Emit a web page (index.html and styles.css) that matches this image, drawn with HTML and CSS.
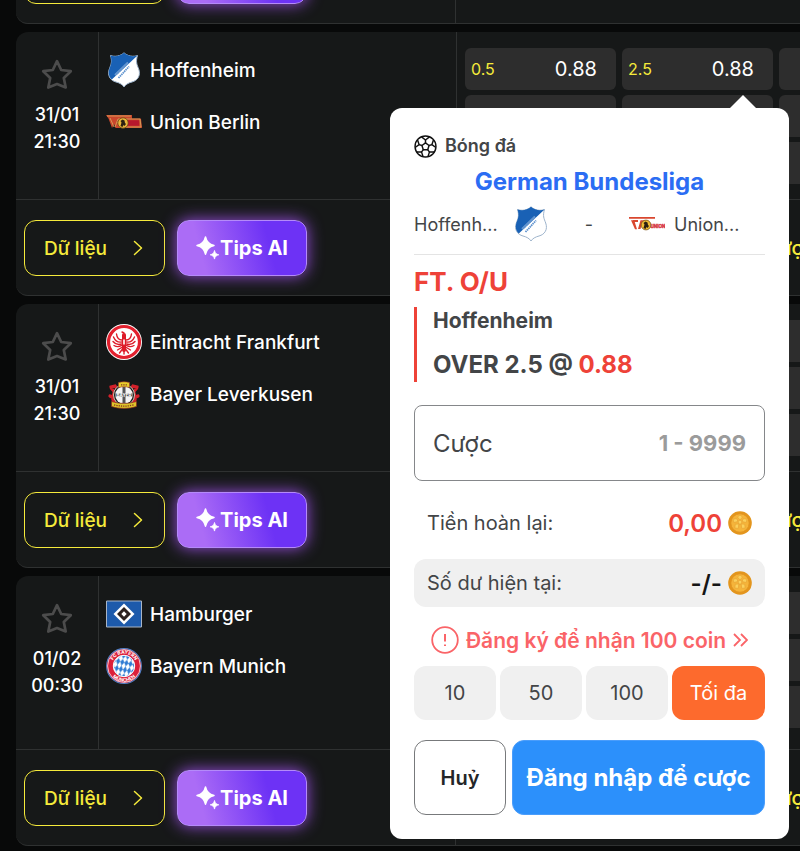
FILE: index.html
```html
<!DOCTYPE html>
<html lang="vi">

<head>
  <meta charset="UTF-8" />
  <meta name="viewport" content="width=device-width, initial-scale=1.0" />
  <title>German Bundesliga - Bóng đá</title>
  <link rel="stylesheet" href="styles.css">
</head>

<body>
  <!-- Icon và logo dùng chung -->
  <svg class="sprite" aria-hidden="true">
    <symbol id="star" viewBox="0 0 32 32">
      <path d="M16 2.200 20.200 11l9.600 1.200-7 6.700 1.900 9.600L16 25l-8.700 3.500 1.900-9.600-7-6.700L11.800 11z" fill="none" stroke="#4c4c4c" stroke-width="2.700" stroke-linejoin="round" />
    </symbol>
    <symbol id="chevron" viewBox="0 0 10 16">
      <path d="M1.500 1.500 8.500 8l-7 6.500" fill="none" stroke="currentColor" stroke-width="1.500" stroke-linecap="round" stroke-linejoin="round" />
    </symbol>
    <symbol id="sparkle" viewBox="0 0 24 24">
      <path d="M9.500 1c1 5 3.200 7.300 8.500 8.600-5.300 1.300-7.500 3.600-8.500 8.600C8.500 13.200 6.300 10.900 1 9.600 6.300 8.300 8.500 6 9.500 1z" fill="#fff" stroke="#fff" stroke-width="1.500" stroke-linejoin="round" />
      <path d="M18.500 14.500c.6 2.600 1.700 3.700 4.300 4.300-2.600.6-3.700 1.700-4.300 4.300-.6-2.600-1.700-3.700-4.300-4.300 2.600-.6 3.700-1.700 4.300-4.300z" fill="#fff" stroke="#fff" stroke-width=".8" stroke-linejoin="round" />
    </symbol>
    <symbol id="ball" viewBox="0 0 24 24">
      <g fill="none" stroke="#111" stroke-width="1.500" stroke-linejoin="round">
        <circle cx="12" cy="12" r="10.900" />
        <path d="m12 8.300 3.700 2.700-1.400 4.300H9.700L8.300 11z" />
        <path d="M12 8.300V5.200M15.700 11l3-1M14.300 15.300l1.900 2.600M9.700 15.300l-1.900 2.600M8.300 11l-3-1" />
        <path d="M7.800 2 12 5.200 16.200 2M20.300 5.200 18.700 10l4.100 3M21.200 17.700l-5-.1-1.700 5M9.500 22.600l-1.700-5-5 .1M1.200 13l4.100-3-1.600-4.800" />
      </g>
    </symbol>
    <symbol id="coin" viewBox="0 0 24 24">
      <circle cx="12" cy="12" r="11.800" fill="#e3951d" />
      <circle cx="12" cy="12" r="9.200" fill="#f5b43a" stroke="#e0921f" stroke-width=".8" />
      <g fill="#fbd05c" stroke="#e8a535" stroke-width=".7">
        <path d="m12 9 2 1.500-.8 2.500h-2.400L10 10.500z" />
        <path d="M12 9 9.500 6 12 4l2.500 2zM14 10.500l1.500-3 3.500.8-.8 3.200zM13.200 13l3.500.2.500 3.800-3.500.4zM10.800 13l-.5 4.400-3.500-.4.500-3.800zM10 10.500l-4.200 1L5 8.300l3.500-.8z" />
      </g>
    </symbol>
    <symbol id="hoffenheim" viewBox="0 0 36 36">
      <path d="M4.500 3.500c4 1.500 10 .8 13.500-2.700 3.500 3.500 9.500 4.200 13.500 2.700-2 6.500-.5 9 1.200 13.500 2.300 6.500-1 11.500-6.700 13-3.500.9-6.500 2.500-8 5-1.500-2.500-4.500-4.100-8-5-5.700-1.500-9-6.500-6.700-13C5 12.500 6.500 10 4.500 3.500z" fill="#fff" stroke="#9eb4cc" />
      <path d="M4.500 3.500c4 1.500 10 .8 13.500-2.700 3.500 3.500 9.500 4.200 13.500 2.700L5.800 27.500C3 25 2 21.500 3.300 17 5 12.500 6.500 10 4.500 3.500z" fill="#1961b5" />
      <path d="M9 23 22 10.500" stroke="#fff" stroke-width="2" opacity=".35" />
      <path d="m10 22.500 11.500-11M12.500 26 23 14.500" stroke="#5f93cf" stroke-width="1.800" stroke-dasharray="1.500 .6" />
    </symbol>
    <symbol id="union" viewBox="0 0 36 16">
      <path d="M0 1h26v3.500h9L36 14H9.500L8 10 6 14 2.500 4.500z" fill="#c9462c" />
      <path d="M1 2h24M4 4l4 9M12 5l-3 8M12 5h3M11 8.500h3M20 5h14l1 8H20" fill="none" stroke="#d8a05a" stroke-width=".9" />
      <path d="M22 9h11" stroke="#b8172c" stroke-width="5.500" />
      <circle cx="17" cy="9" r="5.200" fill="#e8b53c" stroke="#6b4a18" stroke-width=".8" />
      <path d="m14.500 12 1-3.500-1-1.500 2-1.500 2 1 .5 2.500 1 1-1.500 2-1-1-1 2z" fill="#2b2112" />
    </symbol>
    <symbol id="union-light" viewBox="0 0 36 16">
      <path d="M0 1h26v1.800H0zM2 4.200h3.200l2.800 9H6zM9 13l2.500-8.800H16v2h-2.800l-.5 2h2v1.800h-2.500l-.7 3zM4 4h5v2H4z" fill="#d9472f" />
      <text x="21.500" y="12" class="logo-text" font-size="4.500" fill="#d63340" stroke="#d63340" stroke-width=".4">UNION</text>
      <circle cx="17" cy="9" r="4.900" fill="#f0bd35" stroke="#7a551f" stroke-width=".8" />
      <path d="m14.500 12 1-3.500-1-1.500 2-1.500 2 1 .5 2.500 1 1-1.500 2-1-1-1 2z" fill="#2b2112" />
    </symbol>
    <symbol id="frankfurt" viewBox="0 0 36 36">
      <circle cx="18" cy="18" r="18" fill="#fff" />
      <circle cx="18" cy="18" r="15.500" fill="#fff" stroke="#e2202e" stroke-width="3.200" />
      <g fill="none" stroke="#dd1b29" stroke-linecap="round">
        <path d="M18 11v15" stroke-width="4" />
        <path d="M16 16c-3 0-5-2-5.500-6M15.500 18c-3 .5-6-.5-8-5M15.500 20c-3 1-6 .5-8.500-2.500M15.500 21.500c-2.500 1.500-5 1.500-7.500 0M20 16c3 0 5-2 5.500-6M20.500 18c3 .5 6-.5 8-5M20.500 20c3 1 6 .5 8.500-2.500M20.500 21.500c2.500 1.500 5 1.500 7.500 0M16.500 23l-5 3M19.500 23l5 3M16.500 25l-3 4M19.500 25l3 4M18 26v4M18 9l-2-1" stroke-width="1.400" />
      </g>
      <path d="M17.200 15.500h1.600v5h-1.600z" fill="#fff" />
    </symbol>
    <symbol id="leverkusen" viewBox="0 0 36 36">
      <g fill="none" stroke="#d3202a" stroke-width="3.200" stroke-linecap="round">
        <path d="M9 26c-4-2-2-6-1-9s-3-3-3-6l4-1 3 4M27 26c4-2 2-6 1-9s3-3 3-6l-4-1-3 4M4 20l4 2M32 20l-4 2" />
      </g>
      <circle cx="18" cy="19" r="10.500" fill="#1a1a1a" stroke="#c9c4b5" />
      <circle cx="18" cy="19" r="8.800" fill="#f4f4f4" />
      <path d="M16.500 11h3v16h-3zM9.500 17.500h17v3h-17z" fill="#555" />
      <text x="18" y="20.500" class="logo-text" font-size="4.500" fill="#fff" text-anchor="middle">BAYER</text>
      <path d="M12.500 6.500c4-1 7-1 11 0v5c-4-1-7-1-11 0z" fill="#e8cf2b" stroke="#a5322a" stroke-width=".6" />
      <path d="M5.500 25.500c8 2.500 17 2.500 25 0v5c-8 2.500-17 2.500-25 0z" fill="#dcc52a" stroke="#8a2a20" stroke-width=".7" />
      <path d="M8 28.800c7 1.800 13 1.800 20 0M15 8.800h6" fill="none" stroke="#8a3520" stroke-width="1.300" stroke-dasharray="1.300 1" />
    </symbol>
    <symbol id="hamburger" viewBox="0 0 36 36">
      <path d="M.5 5h35v26H.5z" fill="#1d5aab" stroke="#a9b5c6" />
      <path d="m18 7.500 10.500 10.500L18 28.500 7.500 18z" fill="#fff" />
      <path d="m18 11 7 7-7 7-7-7z" fill="#2b211f" />
      <path d="m18 15.300 2.700 2.700-2.700 2.700-2.700-2.700z" fill="#fff" />
    </symbol>
    <symbol id="bayern" viewBox="0 0 36 36">
      <defs>
        <pattern id="lozenge" width="4.200" height="7" patternUnits="userSpaceOnUse" patternTransform="rotate(12)">
          <path d="m2.100 0 2.100 3.500L2.100 7 0 3.500z" fill="#2f7bd3" />
        </pattern>
        <path id="bayern-top" d="M5.700 18a12.300 12.300 0 0 1 24.600 0" />
        <path id="bayern-bottom" d="M2.300 18a15.700 15.700 0 0 0 31.400 0" />
      </defs>
      <circle cx="18" cy="18" r="17.400" fill="#dc1f3a" stroke="#4f7fc4" stroke-width="1.100" />
      <circle cx="18" cy="18" r="16.400" fill="none" stroke="#fff" stroke-width=".7" />
      <circle cx="18" cy="18" r="10.700" fill="#fff" />
      <circle cx="18" cy="18" r="10.700" fill="url(#lozenge)" stroke="#fff" />
      <text class="logo-text" font-size="4.800" fill="#fff" text-anchor="middle"><textPath href="#bayern-top" startOffset="50%">FC BAYERN</textPath></text>
      <text class="logo-text" font-size="4.800" fill="#fff" text-anchor="middle"><textPath href="#bayern-bottom" startOffset="50%">MÜNCHEN</textPath></text>
    </symbol>
  </svg>

  <main class="match-list">
    <article class="match">
      <div class="match-foot">
        <div class="foot-actions">
          <button class="btn-data">Dữ liệu <svg class="chevron"><use href="#chevron" /></svg></button>
          <button class="btn-tips"><svg class="sparkle"><use href="#sparkle" /></svg>Tips AI</button>
        </div>
        <div class="foot-bet"><button class="btn-bet">Cược</button></div>
      </div>
    </article>

    <article class="match">
      <div class="match-main">
        <div class="match-time">
          <button class="fav" aria-label="Yêu thích"><svg class="star"><use href="#star" /></svg></button>
          <span>31/01</span>
          <span>21:30</span>
        </div>
        <div class="teams">
          <div class="team"><svg class="logo"><use href="#hoffenheim" /></svg>Hoffenheim</div>
          <div class="team"><svg class="logo"><use href="#union" /></svg>Union Berlin</div>
        </div>
        <div class="odds">
          <button class="odd"><span class="line">0.5</span><span>0.88</span></button>
          <div class="odd-open">
            <button class="odd"><span class="line">2.5</span><span>0.88</span></button>

            <!-- Phiếu cược -->
            <form class="slip">
              <div class="slip-sport"><svg class="ball"><use href="#ball" /></svg>Bóng đá</div>
              <h2 class="slip-league">German Bundesliga</h2>
              <div class="slip-teams">
                <span>Hoffenh...</span>
                <svg class="logo"><use href="#hoffenheim" /></svg>
                <span class="dash">-</span>
                <svg class="logo"><use href="#union-light" /></svg>
                <span class="away">Union...</span>
              </div>
              <h3 class="slip-market">FT. O/U</h3>
              <div class="slip-pick">
                <p class="pick-team">Hoffenheim</p>
                <p class="pick-odd">OVER 2.5 @ <span class="red">0.88</span></p>
              </div>
              <label class="stake">Cược
                <input type="text" placeholder="1 - 9999">
              </label>
              <div class="row">
                <span>Tiền hoàn lại:</span>
                <span class="amount red">0,00 <svg class="coin"><use href="#coin" /></svg></span>
              </div>
              <div class="row balance">
                <span>Số dư hiện tại:</span>
                <span class="amount">-/- <svg class="coin"><use href="#coin" /></svg></span>
              </div>
              <a class="signup" href="#">
                <svg class="alert" viewBox="0 0 28 28">
                  <circle cx="14" cy="14" r="12.800" fill="none" stroke="currentColor" stroke-width="1.800" />
                  <path d="M14 8v7.500M14 18.500v1.500" stroke="currentColor" stroke-width="2" />
                </svg>
                Đăng ký để nhận 100 coin
                <svg class="more" viewBox="0 0 15 14">
                  <path d="m1 1 6 6-6 6M8 1l6 6-6 6" fill="none" stroke="currentColor" stroke-width="1.800" />
                </svg>
              </a>
              <div class="chips">
                <button type="button" class="chip">10</button>
                <button type="button" class="chip">50</button>
                <button type="button" class="chip">100</button>
                <button type="button" class="chip chip-max">Tối đa</button>
              </div>
              <div class="slip-actions">
                <button type="button" class="btn-cancel">Huỷ</button>
                <button type="button" class="btn-login">Đăng nhập để cược</button>
              </div>
            </form>
          </div>
          <button class="odd"></button>
          <button class="odd"></button>
          <button class="odd"></button>
          <button class="odd"></button>
          <button class="odd"></button>
          <button class="odd"></button>
          <button class="odd"></button>
        </div>
      </div>
      <div class="match-foot">
        <div class="foot-actions">
          <button class="btn-data">Dữ liệu <svg class="chevron"><use href="#chevron" /></svg></button>
          <button class="btn-tips"><svg class="sparkle"><use href="#sparkle" /></svg>Tips AI</button>
        </div>
        <div class="foot-bet"><button class="btn-bet">Cược</button></div>
      </div>
    </article>

    <article class="match">
      <div class="match-main">
        <div class="match-time">
          <button class="fav" aria-label="Yêu thích"><svg class="star"><use href="#star" /></svg></button>
          <span>31/01</span>
          <span>21:30</span>
        </div>
        <div class="teams">
          <div class="team"><svg class="logo"><use href="#frankfurt" /></svg>Eintracht Frankfurt</div>
          <div class="team"><svg class="logo"><use href="#leverkusen" /></svg>Bayer Leverkusen</div>
        </div>
        <div class="odds">
          <button class="odd"></button>
          <button class="odd"></button>
          <button class="odd"></button>
          <button class="odd"></button>
          <button class="odd"></button>
          <button class="odd"></button>
          <button class="odd"></button>
          <button class="odd"></button>
          <button class="odd"></button>
        </div>
      </div>
      <div class="match-foot">
        <div class="foot-actions">
          <button class="btn-data">Dữ liệu <svg class="chevron"><use href="#chevron" /></svg></button>
          <button class="btn-tips"><svg class="sparkle"><use href="#sparkle" /></svg>Tips AI</button>
        </div>
        <div class="foot-bet"><button class="btn-bet">Cược</button></div>
      </div>
    </article>

    <article class="match match-tall">
      <div class="match-main">
        <div class="match-time">
          <button class="fav" aria-label="Yêu thích"><svg class="star"><use href="#star" /></svg></button>
          <span>01/02</span>
          <span>00:30</span>
        </div>
        <div class="teams">
          <div class="team"><svg class="logo"><use href="#hamburger" /></svg>Hamburger</div>
          <div class="team"><svg class="logo"><use href="#bayern" /></svg>Bayern Munich</div>
        </div>
        <div class="odds">
          <button class="odd"></button>
          <button class="odd"></button>
          <button class="odd"></button>
          <button class="odd"></button>
          <button class="odd"></button>
          <button class="odd"></button>
          <button class="odd"></button>
          <button class="odd"></button>
          <button class="odd"></button>
        </div>
      </div>
      <div class="match-foot">
        <div class="foot-actions">
          <button class="btn-data">Dữ liệu <svg class="chevron"><use href="#chevron" /></svg></button>
          <button class="btn-tips"><svg class="sparkle"><use href="#sparkle" /></svg>Tips AI</button>
        </div>
        <div class="foot-bet"><button class="btn-bet">Cược</button></div>
      </div>
    </article>
  </main>
</body>

</html>
```

FILE: styles.css
```css
* {
  box-sizing: border-box;
}

body {
  margin: 0;
  background: #080909;
  color: #fff;
  font-family: Inter, "Liberation Sans", sans-serif;
  font-size: 20px;
  overflow: hidden;
}

button,
input {
  font: inherit;
  color: inherit;
}

button {
  border: none;
  padding: 0;
  background: none;
  cursor: pointer;
}

h2,
h3,
p {
  margin: 0;
}

svg {
  display: block;
  flex: none;
}

.sprite {
  position: absolute;
  width: 0;
  height: 0;
}

.logo-text {
  font-weight: 700;
}

/* Danh sách trận đấu */
.match-list {
  display: flex;
  flex-direction: column;
  gap: 8px;
  min-width: 940px;
  margin-top: -73px;
  padding-left: 16px;
}

.match {
  background: #161818;
  border-bottom: 1px solid #2f3131;
  border-radius: 12px;
}

.match-main {
  display: grid;
  grid-template-columns: 83px 357px 1fr;
  min-height: 167px;
}

.match-tall .match-main {
  min-height: 173px;
}

.match-time {
  display: flex;
  flex-direction: column;
  align-items: center;
  padding-top: 27px;
  border-right: 1px solid #2f3131;
  font-size: 18px;
  font-weight: 500;
  line-height: 27px;
}

.fav {
  margin-bottom: 10px;
}

.star {
  width: 32px;
  height: 32px;
}

.teams {
  display: flex;
  flex-direction: column;
  gap: 16px;
  padding: 20px 7px;
}

.team {
  display: flex;
  align-items: center;
  gap: 8px;
  font-size: 19px;
  font-weight: 500;
}

.logo {
  width: 36px;
  height: 36px;
}

.odds {
  display: grid;
  grid-template-columns: repeat(3, 151px);
  grid-auto-rows: 42px;
  align-content: start;
  gap: 5px 6px;
  padding: 16px 8px 0;
  border-left: 1px solid #2f3131;
}

.odd {
  display: flex;
  align-items: center;
  justify-content: space-between;
  width: 100%;
  height: 42px;
  padding: 0 19px 0 6px;
  background: #2d2d2d;
  border-radius: 6px;
}

.line {
  color: #f5ea3b;
  font-size: 16px;
}

.match-foot {
  display: grid;
  grid-template-columns: 439px 1fr;
  border-top: 1px solid #2f3131;
}

.foot-actions,
.foot-bet {
  display: flex;
  gap: 12px;
  padding: 20px 8px 19px;
}

.foot-bet {
  justify-content: center;
  border-left: 1px solid #2f3131;
  padding-left: 192px;
}

.btn-data,
.btn-tips {
  display: flex;
  align-items: center;
  height: 56px;
  border-radius: 12px;
}

.btn-data {
  justify-content: space-between;
  width: 141px;
  padding: 0 21px 0 19px;
  border: 1px solid #f5ea3b;
  color: #f5ea3b;
  font-size: 19px;
  font-weight: 500;
}

.chevron {
  width: 10px;
  height: 16px;
}

.btn-tips {
  justify-content: center;
  width: 130px;
  border: 1px solid #b48af9;
  background: linear-gradient(75deg, #ab6cf6 20%, #6d32f5 70%);
  box-shadow: 0 0 16px rgba(168, 85, 247, 0.9);
  font-weight: 700;
}

.sparkle {
  width: 24px;
  height: 24px;
}

.btn-bet {
  color: #f5ea3b;
  font-weight: 500;
}

/* Phiếu cược */
.odd-open {
  position: relative;
}

.slip {
  position: absolute;
  z-index: 10;
  top: 60px;
  right: -16px;
  width: 399px;
  padding: 24px;
  background: #fff;
  border-radius: 12px;
  color: #434547;
}

.slip::before {
  content: "";
  position: absolute;
  top: -13px;
  right: 33px;
  border: 13px solid transparent;
  border-top: none;
  border-bottom-color: #fff;
}

.red {
  color: #ee4238;
}

.slip-sport {
  display: flex;
  align-items: center;
  gap: 8px;
  font-size: 18px;
  font-weight: 600;
  line-height: 28px;
}

.ball {
  width: 23px;
  height: 23px;
}

.slip-league {
  margin-top: 6px;
  color: #2b6df3;
  font-size: 24px;
  line-height: 32px;
  text-align: center;
}

.slip-teams {
  display: grid;
  grid-template-columns: 99px 36px 1fr 36px 100px;
  align-items: center;
  margin-top: 8px;
  padding-bottom: 12px;
  border-bottom: 1px solid #e4e4e4;
  font-size: 18px;
}

.dash {
  text-align: center;
}

.away {
  padding-left: 9px;
}

.slip-market {
  margin-top: 11px;
  color: #ee4238;
  font-size: 26px;
  line-height: 32px;
}

.slip-pick {
  display: flex;
  flex-direction: column;
  gap: 13px;
  margin-top: 9px;
  padding-left: 16px;
  border-left: 3px solid #ee4238;
  font-weight: 700;
}

.pick-team {
  font-size: 21px;
  line-height: 28px;
}

.pick-odd {
  font-size: 24px;
  line-height: 34px;
}

.stake {
  display: flex;
  align-items: center;
  justify-content: space-between;
  height: 76px;
  margin-top: 23px;
  padding: 0 18px;
  border: 1px solid #85878a;
  border-radius: 8px;
  font-size: 24px;
}

.stake input {
  width: 180px;
  padding: 0;
  border: none;
  outline: none;
  background: none;
  font-size: 22px;
  font-weight: 700;
  text-align: right;
}

.stake input::placeholder {
  color: #9b9b9b;
}

.row {
  display: flex;
  align-items: center;
  justify-content: space-between;
  height: 48px;
  margin-top: 18px;
  padding: 0 13px;
}

.balance {
  margin-top: 12px;
  background: #f0f0f0;
  border-radius: 12px;
}

.amount {
  display: flex;
  align-items: center;
  gap: 6px;
  font-size: 24px;
  font-weight: 600;
}

.balance .amount {
  color: #151515;
}

.coin {
  width: 24px;
  height: 24px;
}

.signup {
  display: flex;
  align-items: center;
  justify-content: center;
  gap: 7px;
  height: 32px;
  margin-top: 17px;
  color: #fa6468;
  font-size: 21px;
  font-weight: 600;
  text-decoration: none;
  white-space: nowrap;
}

.alert {
  width: 28px;
  height: 28px;
}

.more {
  width: 15px;
  height: 14px;
}

.chips {
  display: grid;
  grid-template-columns: 1fr 1fr 1fr 93px;
  gap: 4px;
  margin-top: 10px;
}

.chip {
  height: 54px;
  background: #f0f0f0;
  border-radius: 12px;
}

.chip-max {
  background: #fd6a2d;
  color: #fff;
}

.slip-actions {
  display: grid;
  grid-template-columns: 92px 1fr;
  gap: 6px;
  margin-top: 20px;
}

.btn-cancel,
.btn-login {
  height: 75px;
  border-radius: 12px;
}

.btn-cancel {
  border: 1px solid #77797b;
  color: #242628;
  font-weight: 600;
}

.btn-login {
  border: 1px solid #4a9dfb;
  background: #2c90fb;
  color: #fff;
  font-size: 24px;
  font-weight: 700;
  white-space: nowrap;
}
```
